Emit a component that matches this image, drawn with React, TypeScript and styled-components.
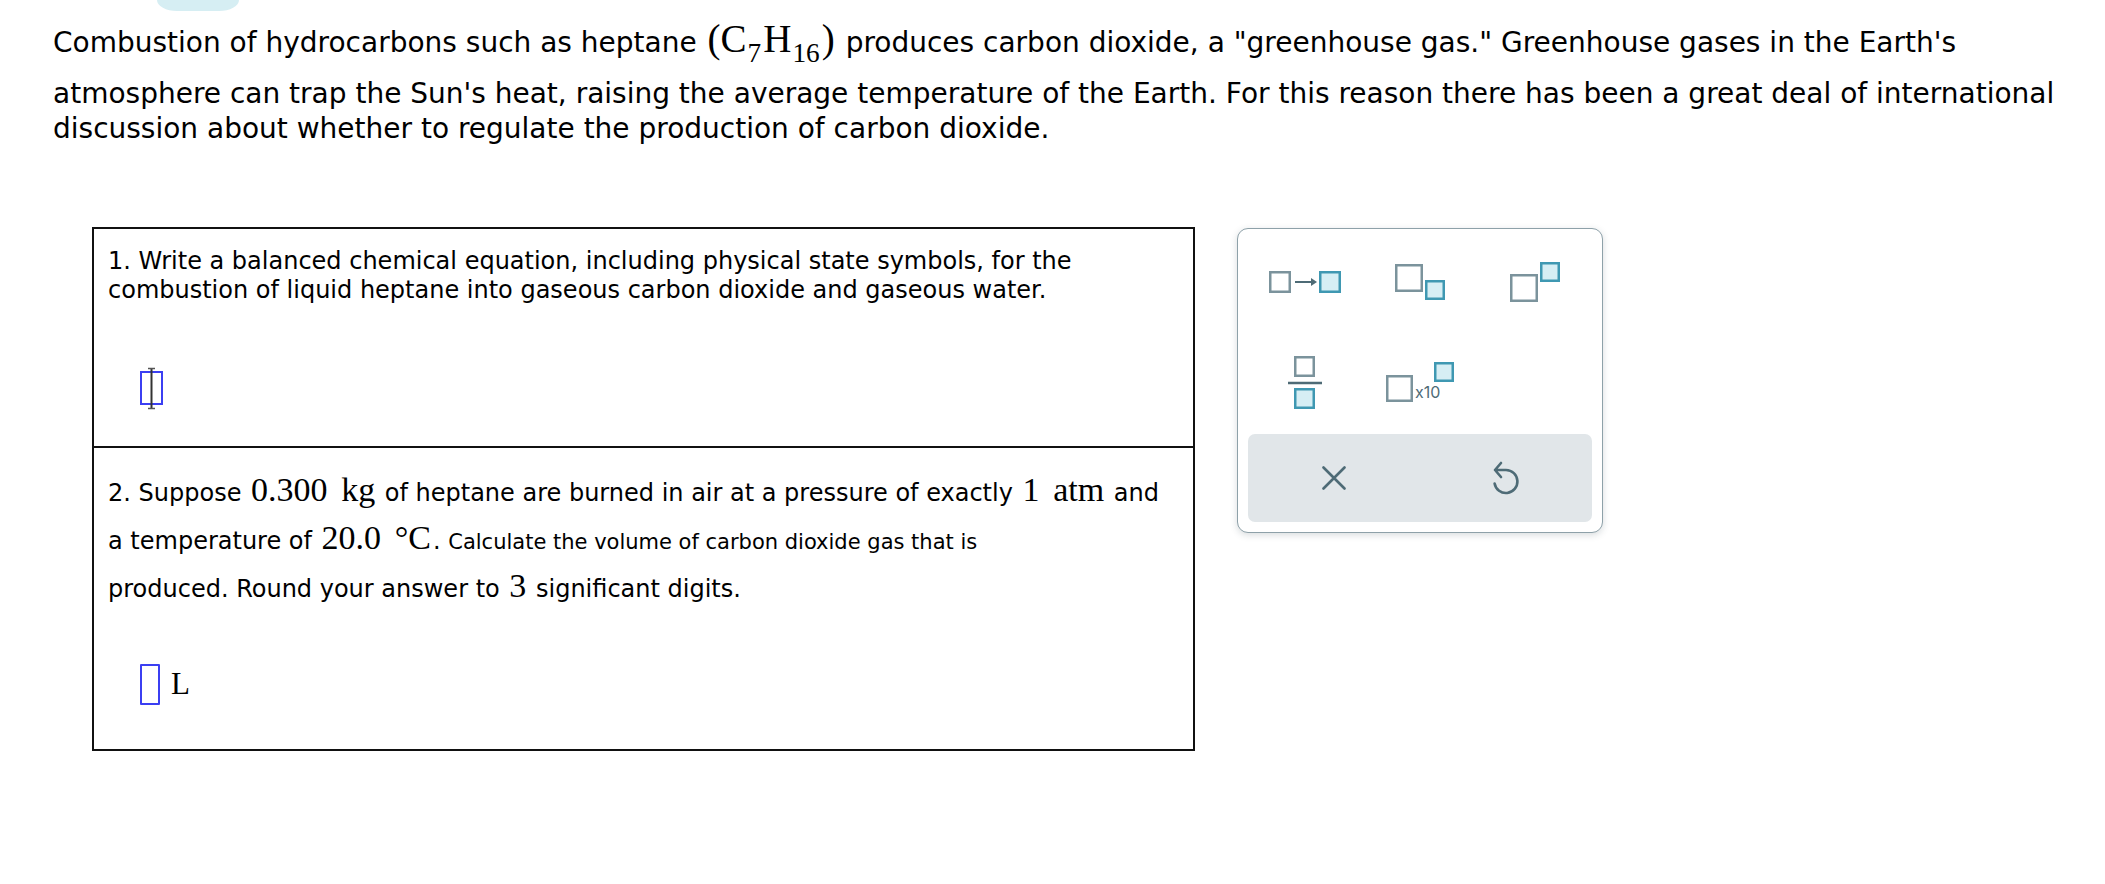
import React from 'react';
import styled, { createGlobalStyle } from 'styled-components';

const GlobalStyle = createGlobalStyle`
  html, body {
    margin: 0;
    padding: 0;
    background: #fff;
  }
  body {
    font-family: "DejaVu Sans", Verdana, sans-serif;
    color: #000;
  }
`;

const GRAY = '#7b939c';
const TEAL = '#3f98b2';
const TEAL_FILL = '#d6eef4';
const DARK = '#4e6b76';

const Page = styled.div`
  padding: 0 20px 40px 53px;
`;

const Pill = styled.div`
  width: 82px;
  height: 11px;
  margin-left: 104px;
  background: #d6eef3;
  border-radius: 0 0 20px 20px / 0 0 11px 11px;
`;

const Intro = styled.p`
  margin: 8px 0 0;
  font-size: 28px;
  line-height: 35px;
`;

const Math = styled.span<{ $size: number }>`
  font-family: "Liberation Serif", "Times New Roman", serif;
  font-size: ${p => p.$size}px;
  line-height: 1;
  white-space: nowrap;
  word-spacing: 0.15em;
  margin: 0 2px;
`;

const Sub = styled.sub`
  font-size: 0.7em;
  vertical-align: -10px;
  line-height: 1.7;
  margin: 0 2px 0 1px;
`;

const Aside = styled.span`
  font-size: 21px;
`;

const Row = styled.div`
  display: flex;
  align-items: flex-start;
  gap: 42px;
  margin: 81px 0 0 39px;
`;

const QuestionBox = styled.div`
  width: 1103px;
  box-sizing: border-box;
  border: 2px solid #111;
`;

const Part = styled.section<{ $height: number; $top: number }>`
  box-sizing: border-box;
  height: ${p => p.$height}px;
  padding: ${p => p.$top}px 14px 0 14px;
  font-size: 24px;
  & + & {
    border-top: 2px solid #111;
  }
`;

const Prompt = styled.p<{ $lineHeight: number }>`
  margin: 0;
  line-height: ${p => p.$lineHeight}px;
`;

const Answer = styled.div<{ $top: number }>`
  display: flex;
  align-items: center;
  gap: 11px;
  margin: ${p => p.$top}px 0 0 32px;
`;

const AnswerSlot = styled.span`
  display: block;
  width: 20px;
  height: 41px;
  box-sizing: border-box;
  border: 2px solid #3b3ff2;
  border-radius: 1px;
`;

const Unit = styled.span`
  font-family: "Liberation Serif", "Times New Roman", serif;
  font-size: 31px;
`;

const Panel = styled.div`
  width: 366px;
  box-sizing: border-box;
  margin-top: 1px;
  padding: 3px 10px 10px;
  background: #fff;
  border: 1.5px solid #8ea1a9;
  border-radius: 11px;
  box-shadow: 0 2px 7px rgba(40, 60, 70, 0.18);
`;

const IconGrid = styled.div`
  display: grid;
  grid-template-columns: repeat(3, 1fr);
  grid-auto-rows: 100px;
  align-items: center;
  justify-items: center;
`;

const ToolButton = styled.button`
  appearance: none;
  border: none;
  background: none;
  padding: 0;
  margin: 0;
  cursor: pointer;
  display: flex;
  align-items: center;
  justify-content: center;
`;

const Actions = styled.div`
  display: grid;
  grid-template-columns: 1fr 1fr;
  height: 88px;
  margin-top: 2px;
  background: #e1e6e9;
  border-radius: 7px;
`;

const ActionButton = styled(ToolButton)`
  height: 100%;
`;

const CursorIcon = () => (
  <svg width="24" height="43" viewBox="0 0 24 43">
    <rect x="1" y="5" width="21" height="32" fill="none" stroke="#3b3ff2" strokeWidth="2" />
    <line x1="11.5" y1="2" x2="11.5" y2="41" stroke="#333" strokeWidth="2" />
    <line x1="8" y1="1.5" x2="15" y2="1.5" stroke="#555" strokeWidth="1.5" />
    <line x1="8" y1="41.5" x2="15" y2="41.5" stroke="#555" strokeWidth="1.5" />
  </svg>
);

const Box = ({ x, y, s, filled }: { x: number; y: number; s: number; filled?: boolean }) => (
  <rect
    x={x + 1.25}
    y={y + 1.25}
    width={s - 2.5}
    height={s - 2.5}
    fill={filled ? TEAL_FILL : 'none'}
    stroke={filled ? TEAL : GRAY}
    strokeWidth="2.5"
  />
);

const ArrowIcon = () => (
  <svg width="72" height="22" viewBox="0 0 72 22">
    <Box x={0} y={0} s={22} />
    <line x1="26" y1="11" x2="44" y2="11" stroke={DARK} strokeWidth="2" />
    <polygon points="42,7 48,11 42,15" fill={DARK} />
    <Box x={50} y={0} s={22} filled />
  </svg>
);

const SubscriptIcon = () => (
  <svg width="50" height="36" viewBox="0 0 50 36">
    <Box x={0} y={0} s={28} />
    <Box x={30} y={16} s={20} filled />
  </svg>
);

const SuperscriptIcon = () => (
  <svg width="50" height="40" viewBox="0 0 50 40">
    <Box x={30} y={0} s={20} filled />
    <Box x={0} y={12} s={28} />
  </svg>
);

const FractionIcon = () => (
  <svg width="34" height="53" viewBox="0 0 34 53">
    <Box x={6} y={0} s={21} />
    <line x1="0" y1="27" x2="34" y2="27" stroke={DARK} strokeWidth="2.5" />
    <Box x={6} y={32} s={21} filled />
  </svg>
);

const ScientificIcon = () => (
  <svg width="68" height="40" viewBox="0 0 68 40">
    <Box x={0} y={13} s={27} />
    <text x="29" y="36" fontSize="16" fill={DARK} fontFamily="Inter, 'DejaVu Sans', sans-serif">
      x10
    </text>
    <Box x={48} y={0} s={20} filled />
  </svg>
);

const ClearIcon = () => (
  <svg width="24" height="24" viewBox="0 0 24 24">
    <path d="M1.5 1.5 L22.5 22.5 M22.5 1.5 L1.5 22.5" stroke={DARK} strokeWidth="2.6" strokeLinecap="round" />
  </svg>
);

const UndoIcon = () => (
  <svg width="28" height="36" viewBox="0 0 28 36">
    <path
      d="M9 3 L3 10 L9 17 M3 10 H14 A11.5 11.5 0 1 1 2.6 23.5"
      fill="none"
      stroke={DARK}
      strokeWidth="2.6"
      strokeLinecap="round"
      strokeLinejoin="round"
    />
  </svg>
);

const App: React.FC = () => (
  <>
    <GlobalStyle />
    <Page>
      <Pill />
      <Intro>
        Combustion of hydrocarbons such as heptane{' '}
        <Math $size={39}>
          (C<Sub>7</Sub>H<Sub>16</Sub>)
        </Math>{' '}
        produces carbon dioxide, a "greenhouse gas." Greenhouse gases in the Earth's
        <br />
        atmosphere can trap the Sun's heat, raising the average temperature of the Earth. For this reason there has
        been a great deal of international
        <br />
        discussion about whether to regulate the production of carbon dioxide.
      </Intro>
      <Row>
        <QuestionBox>
          <Part $height={217} $top={18}>
            <Prompt $lineHeight={29}>
              1. Write a balanced chemical equation, including physical state symbols, for the
              <br />
              combustion of liquid heptane into gaseous carbon dioxide and gaseous water.
            </Prompt>
            <Answer $top={62}>
              <CursorIcon />
            </Answer>
          </Part>
          <Part $height={303} $top={22}>
            <Prompt $lineHeight={47.5}>
              2. Suppose <Math $size={34}>0.300 kg</Math> of heptane are burned in air at a pressure of exactly{' '}
              <Math $size={34}>1 atm</Math> and
              <br />a temperature of <Math $size={34}>20.0 °C</Math>.{' '}
              <Aside>Calculate the volume of carbon dioxide gas that is</Aside>
              <br />
              produced. Round your answer to <Math $size={34}>3</Math> significant digits.
            </Prompt>
            <Answer $top={50}>
              <AnswerSlot />
              <Unit>L</Unit>
            </Answer>
          </Part>
        </QuestionBox>
        <Panel>
          <IconGrid>
            <ToolButton aria-label="Reaction arrow">
              <ArrowIcon />
            </ToolButton>
            <ToolButton aria-label="Subscript">
              <SubscriptIcon />
            </ToolButton>
            <ToolButton aria-label="Superscript">
              <SuperscriptIcon />
            </ToolButton>
            <ToolButton aria-label="Fraction">
              <FractionIcon />
            </ToolButton>
            <ToolButton aria-label="Scientific notation">
              <ScientificIcon />
            </ToolButton>
          </IconGrid>
          <Actions>
            <ActionButton aria-label="Clear">
              <ClearIcon />
            </ActionButton>
            <ActionButton aria-label="Undo">
              <UndoIcon />
            </ActionButton>
          </Actions>
        </Panel>
      </Row>
    </Page>
  </>
);

export default App;
